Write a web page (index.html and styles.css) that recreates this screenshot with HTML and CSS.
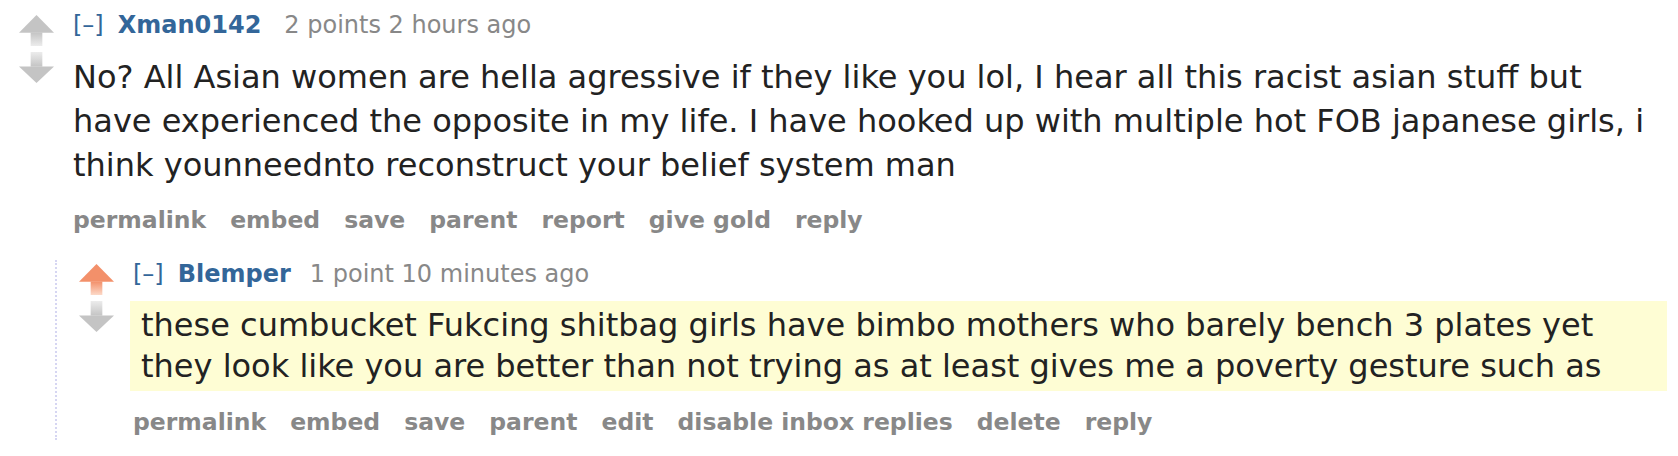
FILE: index.html
```html
<!DOCTYPE html>
<html lang="en">
<head>
<meta charset="utf-8">
<title>Comments</title>
<link rel="stylesheet" href="styles.css">
</head>
<body>
<div class="thread">
  <div class="comment">
    <div class="comment-row">
      <div class="midcol">
        <svg class="arrow" viewBox="0 0 15 14" preserveAspectRatio="none" aria-label="upvote">
          <defs>
            <linearGradient id="upGray" x1="0" y1="0" x2="0" y2="1">
              <stop offset="0" stop-color="#c4c4c4"/>
              <stop offset="1" stop-color="#ececec"/>
            </linearGradient>
          </defs>
          <path d="M7.5 0 L15 8 L0 8 Z" fill="#c4c4c4"/>
          <rect x="5" y="7.9" width="5" height="6.1" fill="url(#upGray)"/>
        </svg>
        <svg class="arrow" viewBox="0 0 15 14" preserveAspectRatio="none" aria-label="downvote">
          <defs>
            <linearGradient id="downGray" x1="0" y1="0" x2="0" y2="1">
              <stop offset="0" stop-color="#ececec"/>
              <stop offset="1" stop-color="#c4c4c4"/>
            </linearGradient>
          </defs>
          <rect x="5" y="0" width="5" height="6.6" fill="url(#downGray)"/>
          <path d="M0 6.5 L15 6.5 L7.5 14 Z" fill="#c4c4c4"/>
        </svg>
      </div>
      <div class="entry">
        <p class="tagline"><span class="expand">[–]</span><span class="author">Xman0142</span><span class="meta">2 points 2 hours ago</span></p>
        <div class="md">No? All Asian women are hella agressive if they like you lol, I hear all this racist asian stuff but have experienced the opposite in my life. I have hooked up with multiple hot FOB japanese girls, i think younneednto reconstruct your belief system man</div>
        <ul class="buttons">
          <li>permalink</li>
          <li>embed</li>
          <li>save</li>
          <li>parent</li>
          <li>report</li>
          <li>give gold</li>
          <li>reply</li>
        </ul>
      </div>
    </div>
    <div class="child">
      <div class="comment nested">
        <div class="comment-row">
          <div class="midcol">
            <svg class="arrow" viewBox="0 0 15 14" preserveAspectRatio="none" aria-label="upvoted">
              <defs>
                <linearGradient id="upOrange" x1="0" y1="0" x2="0" y2="1">
                  <stop offset="0" stop-color="#f3906a"/>
                  <stop offset="1" stop-color="#fcd9c8"/>
                </linearGradient>
              </defs>
              <path d="M7.5 0 L15 8 L0 8 Z" fill="#f3906a"/>
              <rect x="5" y="7.9" width="5" height="6.1" fill="url(#upOrange)"/>
            </svg>
            <svg class="arrow" viewBox="0 0 15 14" preserveAspectRatio="none" aria-label="downvote">
              <defs>
                <linearGradient id="downGray2" x1="0" y1="0" x2="0" y2="1">
                  <stop offset="0" stop-color="#ececec"/>
                  <stop offset="1" stop-color="#c4c4c4"/>
                </linearGradient>
              </defs>
              <rect x="5" y="0" width="5" height="6.6" fill="url(#downGray2)"/>
              <path d="M0 6.5 L15 6.5 L7.5 14 Z" fill="#c4c4c4"/>
            </svg>
          </div>
          <div class="entry">
            <p class="tagline"><span class="expand">[–]</span><span class="author author-tight">Blemper</span><span class="meta">1 point 10 minutes ago</span></p>
            <div class="md md-new">these cumbucket Fukcing shitbag girls have bimbo mothers who barely bench 3 plates yet they look like you are better than not trying as at least gives me a poverty gesture such as</div>
            <ul class="buttons">
              <li>permalink</li>
              <li>embed</li>
              <li>save</li>
              <li>parent</li>
              <li>edit</li>
              <li>disable inbox replies</li>
              <li>delete</li>
              <li>reply</li>
            </ul>
          </div>
        </div>
      </div>
    </div>
  </div>
</div>
</body>
</html>
```

FILE: styles.css
```css
html, body {
  margin: 0;
  padding: 0;
  background: #ffffff;
}

body {
  font-family: "DejaVu Sans", Verdana, sans-serif;
  color: #222222;
}

.thread {
  padding: 11px 11px 0 0;
}

.comment {
  padding-left: 19px;
}

.comment.nested {
  padding-left: 0;
}

.comment-row {
  display: flex;
  gap: 19px;
}

.midcol {
  flex: 0 0 35px;
  display: flex;
  flex-direction: column;
  gap: 6px;
  padding-top: 4px;
}

.arrow {
  display: block;
  width: 35px;
  height: 31px;
}

.entry {
  flex: 1 1 auto;
  min-width: 0;
}

.tagline {
  margin: 0;
  display: flex;
  align-items: baseline;
  font-size: 24px;
  line-height: 28px;
  white-space: nowrap;
}

.expand {
  color: #336699;
  margin-right: 14px;
}

.author {
  color: #336699;
  font-weight: bold;
  margin-right: 23px;
}

.author-tight {
  margin-right: 19px;
}

.meta {
  color: #888888;
}

.md {
  margin-top: 16px;
  font-size: 32px;
  line-height: 44px;
  color: #222222;
}

.md-new {
  margin-top: 13px;
  margin-left: -3px;
  padding: 4px 11px;
  line-height: 41px;
  background: #fefdd4;
}

.buttons {
  list-style: none;
  margin: 18px 0 0;
  padding: 0;
  display: flex;
  gap: 24px;
  font-size: 23.5px;
  line-height: 30px;
  font-weight: bold;
  color: #888888;
  white-space: nowrap;
}

.md-new + .buttons {
  margin-top: 16px;
}

.child {
  margin: 25px 0 16px 36px;
  border-left: 2px dotted #d6d6f2;
  padding: 0 0 3px 22px;
}
```
